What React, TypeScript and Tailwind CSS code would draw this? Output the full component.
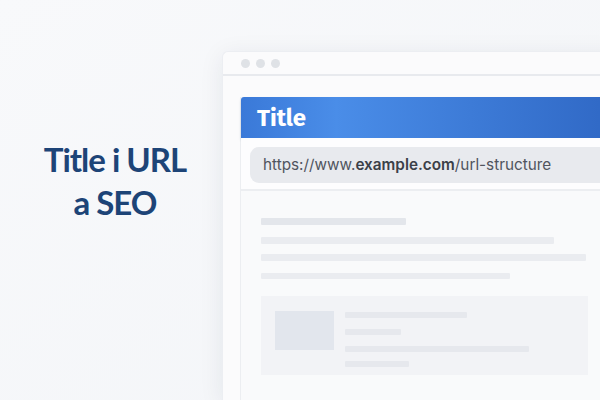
import React from "react";

const Bar = ({ w, h = "h-[7px]", mt, color = "bg-[#eaecf0]" }: { w: string; h?: string; mt: string; color?: string }) => (
  <div className={`${w} ${h} ${mt} ${color} rounded-[1px]`} />
);

export default function App() {
  return (
    <div className="w-[600px] h-[400px] overflow-hidden flex bg-[#f6f7f9] bg-gradient-to-br from-[#f8f9fb] to-[#f3f5f8]">
      {/* Headline */}
      <div className="w-[222px] shrink-0 flex items-center justify-center pb-[38px]">
        <h1
          className="text-center font-bold text-[#1d4477] text-[33px] leading-[43px] tracking-[-1px] pl-[8px]"
          style={{ fontFamily: "Lato, 'Noto Sans', sans-serif" }}
        >
          Title i URL
          <br />
          a SEO
        </h1>
      </div>

      {/* Browser window */}
      <div className="w-[400px] shrink-0 mt-[51px] rounded-tl-[6px] bg-[#fbfbfc] border-l border-t border-[#eceef2] shadow-[0_4px_24px_rgba(30,40,70,0.08)]">
        <div className="h-[24px] flex items-center gap-[6px] pl-[18px] border-b-2 border-[#e8eaee]">
          <span className="w-[9px] h-[9px] rounded-full bg-[#dfe2e6]" />
          <span className="w-[9px] h-[9px] rounded-full bg-[#dfe2e6]" />
          <span className="w-[9px] h-[9px] rounded-full bg-[#dfe2e6]" />
        </div>

        <div className="ml-[17px] mt-[21px] bg-[#f9fafb] border-l border-[#eceef1] h-[320px]">
          {/* Page title bar */}
          <div className="h-[41px] flex items-center pl-[16px] rounded-tl-[3px] bg-gradient-to-r from-[#3a79d8] via-[#4a8de8] via-25% to-[#2f67c4] shadow-[0_2px_3px_rgba(40,60,100,0.18)]">
            <span
              className="text-white font-bold text-[24px] leading-none"
              style={{ fontFamily: "'Fira Sans', 'Open Sans', sans-serif" }}
            >
              Title
            </span>
          </div>

          {/* Address strip */}
          <div className="bg-[#fdfdfe] pt-[9px] pb-[6px] pl-[9px] border-b-2 border-[#eceef1]">
            <div
              className="h-[36px] rounded-l-[9px] bg-[#e8eaee] flex items-center pl-[13px] text-[15.3px] text-[#50555e] whitespace-nowrap"
              style={{ fontFamily: "Inter, 'Liberation Sans', sans-serif" }}
            >
              https://www.<span className="font-semibold text-[#3b4048]">example.com</span>/url-structure
            </div>
          </div>

          {/* Page body skeleton */}
          <div className="pl-[20px]">
            <Bar w="w-[145px]" mt="mt-[27px]" color="bg-[#e3e6eb]" />
            <Bar w="w-[293px]" mt="mt-[12px]" />
            <Bar w="w-[325px]" mt="mt-[10px]" />
            <Bar w="w-[249px]" mt="mt-[12px]" h="h-[6px]" />

            <div className="mt-[17px] w-[327px] h-[79px] bg-[#f2f3f6] flex pl-[14px] pt-[15px]">
              <div className="w-[59px] h-[39px] bg-[#e2e6ed]" />
              <div className="ml-[11px] pt-[1px]">
                <Bar w="w-[122px]" h="h-[6px]" mt="mt-0" color="bg-[#e6e8ed]" />
                <Bar w="w-[56px]" h="h-[6px]" mt="mt-[11px]" color="bg-[#e6e8ed]" />
                <Bar w="w-[184px]" h="h-[6px]" mt="mt-[11px]" color="bg-[#e6e8ed]" />
                <Bar w="w-[64px]" h="h-[6px]" mt="mt-[9px]" color="bg-[#e6e8ed]" />
              </div>
            </div>
          </div>
        </div>
      </div>
    </div>
  );
}
